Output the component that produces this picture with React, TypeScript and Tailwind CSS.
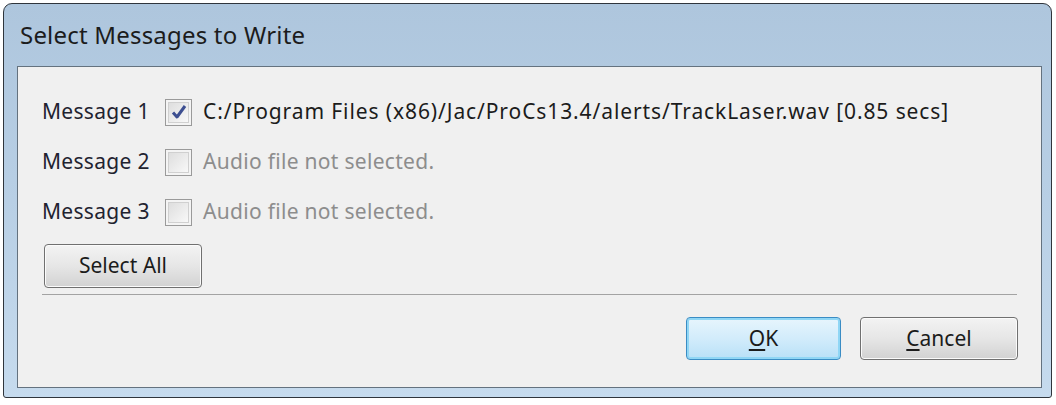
import * as React from 'react';

const rows = [
  { label: 'Message 1', checked: true, text: 'C:/Program Files (x86)/Jac/ProCs13.4/alerts/TrackLaser.wav [0.85 secs]' },
  { label: 'Message 2', checked: false, text: 'Audio file not selected.' },
  { label: 'Message 3', checked: false, text: 'Audio file not selected.' },
];

const CheckBox = ({ checked }: { checked: boolean }) => (
  <div className="w-[27px] h-[27px] border border-[#9a9a9a] bg-[#f4f4f4] flex items-center justify-center shrink-0">
    <div className="w-[21px] h-[21px] border border-[#d0d0d0] bg-gradient-to-br from-[#dedede] to-[#f8f8f8] flex items-center justify-center">
      {checked && (
        <svg width="18" height="18" viewBox="0 0 18 18">
          <path d="M3 9.5 L7 14 L15 3" fill="none" stroke="#3d4f91" strokeWidth="3" strokeLinejoin="round" />
        </svg>
      )}
    </div>
  </div>
);

const Button = ({ children, primary, className }: { children: React.ReactNode; primary?: boolean; className?: string }) => (
  <button
    className={`${className} rounded-[4px] border text-[21px] text-[#1b1b1b] flex items-center justify-center ${
      primary
        ? 'border-[#3a8cc4] shadow-[inset_0_0_0_2px_#8fd6f5] bg-gradient-to-b from-[#e7f5fd] via-[#d2ecfb] to-[#b8e0f7]'
        : 'border-[#707070] shadow-[inset_0_0_0_1px_#fbfbfb] bg-gradient-to-b from-[#f3f3f3] via-[#e6e6e6] to-[#d2d2d2]'
    }`}
  >
    {children}
  </button>
);

export default function App() {
  return (
    <div
      className="w-[1056px] h-[405px] bg-white overflow-hidden pt-[3px] pl-[3px]"
      style={{ fontFamily: '"Noto Sans", "Open Sans", sans-serif' }}
    >
      <div className="w-[1049px] h-[395px] border border-[#2f353c] rounded-t-[9px] rounded-b-[3px] bg-gradient-to-b from-[#aec6dd] via-[#b8cfe5] to-[#c6dbee] flex flex-col pl-[13px] pr-[9px] pb-[9px]">
        <div className="h-[62px] flex items-center pl-[3px] text-[24px] tracking-[0.2px] text-[#1c1c1c] shrink-0">
          Select Messages to Write
        </div>
        <div className="flex-1 bg-[#f0f0f0] border border-[#64727f] flex flex-col pt-[20px] pl-[24px] pr-[23px]">
          {rows.map(r => (
            <div key={r.label} className="h-[50px] flex items-center text-[21px]">
              <span className="w-[123px] text-[#1f2330] tracking-[0.3px] shrink-0">{r.label}</span>
              <CheckBox checked={r.checked} />
              <span
                className={`ml-[11px] whitespace-nowrap ${
                  r.checked ? 'text-[#1c1c1c] tracking-[0.9px]' : 'text-[#8d8d8d] tracking-[0.3px]'
                }`}
              >
                {r.text}
              </span>
            </div>
          ))}
          <Button className="mt-[7px] ml-[2px] w-[158px] h-[44px]">Select All</Button>
          <div className="mt-[6px] h-px bg-[#a3a3a3] mr-[1px]" />
          <div className="mt-[22px] flex justify-end gap-[19px]">
            <Button primary className="w-[155px] h-[43px]">
              <span className="underline underline-offset-[3px]">O</span>K
            </Button>
            <Button className="w-[158px] h-[43px]">
              <span className="underline underline-offset-[3px]">C</span>ancel
            </Button>
          </div>
        </div>
      </div>
    </div>
  );
}
